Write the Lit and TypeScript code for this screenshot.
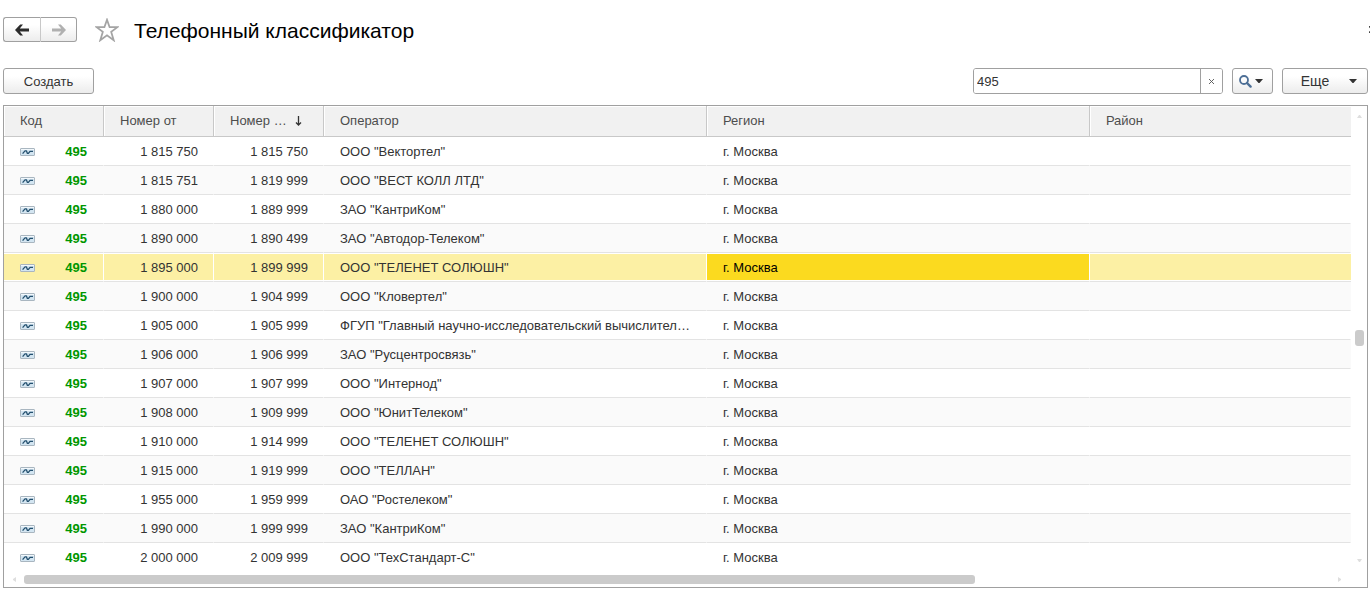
import { LitElement, html, css, svg } from "lit";
import { customElement, property, state } from "lit/decorators.js";
import { classMap } from "lit/directives/class-map.js";
import { styleMap } from "lit/directives/style-map.js";

interface PhoneRange {
  code: string;
  from: string;
  to: string;
  operator: string;
  region: string;
  district: string;
}

const range = (from: string, to: string, operator: string): PhoneRange => ({
  code: "495",
  from,
  to,
  operator,
  region: "г. Москва",
  district: "",
});

const RANGES: PhoneRange[] = [
  range("1 815 750", "1 815 750", 'ООО "Вектортел"'),
  range("1 815 751", "1 819 999", 'ООО "ВЕСТ КОЛЛ ЛТД"'),
  range("1 880 000", "1 889 999", 'ЗАО "КантриКом"'),
  range("1 890 000", "1 890 499", 'ЗАО "Автодор-Телеком"'),
  range("1 895 000", "1 899 999", 'ООО "ТЕЛЕНЕТ СОЛЮШН"'),
  range("1 900 000", "1 904 999", 'ООО "Кловертел"'),
  range("1 905 000", "1 905 999", 'ФГУП "Главный научно-исследовательский вычислител…'),
  range("1 906 000", "1 906 999", 'ЗАО "Русцентросвязь"'),
  range("1 907 000", "1 907 999", 'ООО "Интернод"'),
  range("1 908 000", "1 909 999", 'ООО "ЮнитТелеком"'),
  range("1 910 000", "1 914 999", 'ООО "ТЕЛЕНЕТ СОЛЮШН"'),
  range("1 915 000", "1 919 999", 'ООО "ТЕЛЛАН"'),
  range("1 955 000", "1 959 999", 'ОАО "Ростелеком"'),
  range("1 990 000", "1 999 999", 'ЗАО "КантриКом"'),
  range("2 000 000", "2 009 999", 'ООО "ТехСтандарт-С"'),
];

const caret = svg`<path d="M0 0H8L4.5 4H3.5Z" fill="#333"/>`;

@customElement("range-table")
export class RangeTable extends LitElement {
  static styles = css`
    :host {
      display: block;
    }
    .frame {
      display: grid;
      grid-template-columns: minmax(0, 1fr) 16px;
      border: 1px solid #a0a0a0;
      background: #fff;
    }
    table {
      width: 100%;
      table-layout: fixed;
      border-collapse: separate;
      border-spacing: 0;
      font-size: 13px;
      color: #333;
    }
    .c-code {
      width: 100px;
    }
    .c-num {
      width: 110px;
    }
    .c-text {
      width: 28.43%;
    }
    th,
    td {
      box-sizing: border-box;
      padding: 0 12px 0 16px;
      overflow: hidden;
      text-overflow: ellipsis;
      white-space: nowrap;
      line-height: 28px;
    }
    th {
      height: 31px;
      text-align: left;
      font-weight: 400;
      color: #4d4d4d;
      background: #f1f1f1;
      border-right: 1px solid #c8c8c8;
      border-bottom: 1px solid #c8c8c8;
      box-shadow: inset 1px 1px #fff;
    }
    th:last-child {
      border-right: 0;
    }
    .sort {
      display: flex;
      align-items: center;
      gap: 8px;
    }
    td {
      height: 29px;
      padding-top: 2px;
      line-height: 26px;
      border-bottom: 1px solid #e3e3e3;
      border-right: 1px solid transparent;
      background-clip: padding-box;
    }
    tbody tr:nth-child(even) {
      background: #fafafa;
    }
    tbody tr:last-child td {
      border-bottom-color: transparent;
    }
    td.num {
      padding-right: 15px;
      text-align: right;
    }
    td.key {
      padding-right: 16px;
    }
    .code {
      display: flex;
      align-items: center;
      justify-content: space-between;
      color: #009600;
      font-weight: 700;
    }
    tbody tr.selected {
      background: #fff;
    }
    .selected td {
      background-color: #fcf0a4;
      box-shadow: inset 0 1px #fff, inset 0 -1px #fff;
    }
    .selected td:last-child {
      border-right: 0;
    }
    .selected td.current {
      background-color: #fbda1f;
      color: #000;
    }
    .vbar {
      display: flex;
      flex-direction: column;
      align-items: center;
      justify-content: space-between;
      padding: 9px 0 10px;
    }
    .vtrack {
      flex: 1;
      display: flex;
      flex-direction: column;
    }
    .before {
      flex: none;
    }
    .hbar {
      display: flex;
      align-items: center;
      gap: 8px;
      height: 15px;
      padding: 0 10px 0 9px;
    }
    .htrack {
      flex: 1;
      display: flex;
    }
    .thumb {
      background: #cbcbcb;
      border-radius: 3px;
    }
    .vtrack .thumb {
      width: 9px;
      height: 16px;
    }
    .htrack .thumb {
      height: 9px;
    }
    svg {
      display: block;
      flex: none;
    }
  `;

  @property({ attribute: false }) rows: PhoneRange[] = [];
  @state() private selected = 4;

  private rowIcon() {
    return html`<svg width="15" height="8" viewBox="0 0 15 8" aria-hidden="true">
      <rect x="0.5" y="0.5" width="14" height="7" rx="0.5" fill="#d3e5f1" stroke="#a9b6c0" />
      <path d="M1 1.5H14" stroke="#f2f8fc" />
      <path
        d="M2.6 5.6L5 2.8H6.4L7.4 5.4H8.4L10 3.4H13"
        fill="none"
        stroke="#24506f"
        stroke-width="1.3"
        stroke-linejoin="round"
      />
    </svg>`;
  }

  render() {
    return html`
      <div class="frame">
        <table>
          <colgroup>
            <col class="c-code" />
            <col class="c-num" />
            <col class="c-num" />
            <col class="c-text" />
            <col class="c-text" />
            <col />
          </colgroup>
          <thead>
            <tr>
              <th>Код</th>
              <th>Номер от</th>
              <th aria-sort="ascending">
                <div class="sort">
                  <span>Номер …</span>
                  <svg width="7" height="10" viewBox="0 0 7 10" aria-hidden="true">
                    <path d="M3.5 0V9M1 6.5L3.5 9L6 6.5" fill="none" stroke="#333" stroke-width="1.3" />
                  </svg>
                </div>
              </th>
              <th>Оператор</th>
              <th>Регион</th>
              <th>Район</th>
            </tr>
          </thead>
          <tbody>
            ${this.rows.map(
              (r, i) => html`<tr
                class=${classMap({ selected: i === this.selected })}
                @click=${() => (this.selected = i)}
              >
                <td class="key"><div class="code">${this.rowIcon()}<span>${r.code}</span></div></td>
                <td class="num">${r.from}</td>
                <td class="num">${r.to}</td>
                <td>${r.operator}</td>
                <td class=${classMap({ current: i === this.selected })}>${r.region}</td>
                <td>${r.district}</td>
              </tr>`
            )}
          </tbody>
        </table>
        <div class="vbar">
          <svg width="5" height="3" viewBox="0 0 5 3"><path d="M2 0H3L5 3H0Z" fill="#dedede" /></svg>
          <div class="vtrack">
            <div class="before" style=${styleMap({ height: "48%" })}></div>
            <div class="thumb"></div>
          </div>
          <svg width="5" height="3" viewBox="0 0 5 3"><path d="M0 0H5L3 3H2Z" fill="#dedede" /></svg>
        </div>
        <div class="hbar">
          <svg width="3" height="5" viewBox="0 0 3 5"><path d="M3 0V5L0 3V2Z" fill="#dedede" /></svg>
          <div class="htrack">
            <div class="thumb" style=${styleMap({ width: "72.8%" })}></div>
          </div>
          <svg width="3" height="5" viewBox="0 0 3 5"><path d="M0 0V5L3 3V2Z" fill="#dedede" /></svg>
        </div>
      </div>
    `;
  }
}

@customElement("app-root")
export class AppRoot extends LitElement {
  static styles = css`
    :host {
      display: block;
      font-family: "Liberation Sans", Arial, sans-serif;
      font-size: 13px;
      color: #333;
      background: #fff;
    }
    header {
      position: relative;
      overflow: hidden;
      display: flex;
      align-items: center;
      padding: 9px 3px 10px;
      height: 41px;
    }
    h1 {
      margin: 0 0 0 15px;
      padding-top: 2px;
      font-size: 21px;
      line-height: 24px;
      font-weight: 400;
      color: #000;
    }
    button {
      box-sizing: border-box;
      display: flex;
      align-items: center;
      justify-content: center;
      height: 26px;
      margin: 0;
      padding: 0;
      font: inherit;
      color: #333;
      border: 1px solid #a0a0a0;
      border-radius: 3px;
      background: linear-gradient(#fff 30%, #ececec);
    }
    .nav {
      display: flex;
      margin-right: 18px;
    }
    .nav button {
      height: 25px;
    }
    .nav .back {
      width: 38px;
      border-radius: 3px 0 0 3px;
      border-right-color: #c8c8c8;
    }
    .nav .forward {
      width: 36px;
      border-left: 0;
      border-radius: 0 3px 3px 0;
    }
    .star,
    .close {
      border: 0;
      background: none;
    }
    .close {
      position: absolute;
      right: -6px;
      top: 16px;
    }
    .bar {
      display: flex;
      align-items: center;
      padding: 8px 2px 11px 3px;
    }
    .create {
      width: 91px;
      padding-top: 1px;
    }
    .search {
      box-sizing: border-box;
      display: flex;
      width: 250px;
      height: 26px;
      margin: 0 9px 0 auto;
      border: 1px solid #a0a0a0;
      border-radius: 3px;
      overflow: hidden;
    }
    input {
      flex: 1;
      min-width: 0;
      padding: 1px 3px 0;
      border: 0;
      outline: 0;
      font: inherit;
      color: #333;
      background: #fff;
    }
    .clear {
      width: 22px;
      height: 24px;
      border: 0;
      border-left: 1px solid #a0a0a0;
      border-radius: 0;
      background: #fff;
    }
    .find {
      width: 41px;
      gap: 3px;
      margin-right: 9px;
      padding-right: 4px;
    }
    .more {
      width: 86px;
      gap: 20px;
      padding-left: 8px;
      font-size: 14px;
    }
    range-table {
      margin: 0 2px 12px 3px;
    }
    svg {
      display: block;
      flex: none;
    }
  `;

  @state() private query = "495";

  render() {
    return html`
      <header>
        <div class="nav">
          <button class="back" aria-label="Назад">
            <svg width="14" height="12" viewBox="0 0 14 12">
              <path d="M0 6L5.2 0.6H8L4.8 4.6H14V7.4H4.8L8 11.4H5.2Z" fill="#2b2b2b" />
            </svg>
          </button>
          <button class="forward" aria-label="Вперед">
            <svg width="14" height="12" viewBox="0 0 14 12">
              <path d="M14 6L8.8 0.6H6L9.2 4.6H0V7.4H9.2L6 11.4H8.8Z" fill="#b0b0b0" />
            </svg>
          </button>
        </div>
        <button class="star" aria-label="Избранное">
          <svg width="24" height="24" viewBox="0 0 24 24">
            <path
              d="M12 1.8L14.6 9.2H22.4L16.2 13.9L18.7 22.2L12 17.3L5.3 22.2L7.8 13.9L1.6 9.2H9.4Z"
              fill="#fff"
              stroke="#a4a4a4"
              stroke-width="1.8"
            />
          </svg>
        </button>
        <h1>Телефонный классификатор</h1>
        <button class="close" aria-label="Закрыть">
          <svg width="7" height="7" viewBox="0 0 7 7">
            <path d="M0 0L7 7M7 0L0 7" stroke="#444" stroke-width="1.6" />
          </svg>
        </button>
      </header>
      <div class="bar">
        <button class="create">Создать</button>
        <div class="search">
          <input
            type="text"
            aria-label="Поиск"
            .value=${this.query}
            @input=${(e: Event) => (this.query = (e.target as HTMLInputElement).value)}
          />
          <button class="clear" aria-label="Очистить" @click=${() => (this.query = "")}>
            <svg width="5" height="5" viewBox="0 0 5 5">
              <path d="M0 0L5 5M5 0L0 5" stroke="#555" stroke-width="0.9" />
            </svg>
          </button>
        </div>
        <button class="find" aria-label="Найти">
          <svg width="13" height="13" viewBox="0 0 13 13">
            <circle cx="5" cy="5" r="4" fill="none" stroke="#4d6f96" stroke-width="1.8" />
            <path d="M8 8L11.6 11.6" stroke="#4d6f96" stroke-width="2.4" stroke-linecap="round" />
          </svg>
          <svg width="8" height="4" viewBox="0 0 8 4">${caret}</svg>
        </button>
        <button class="more">
          <span>Еще</span>
          <svg width="8" height="4" viewBox="0 0 8 4">${caret}</svg>
        </button>
      </div>
      <range-table .rows=${RANGES}></range-table>
    `;
  }
}
